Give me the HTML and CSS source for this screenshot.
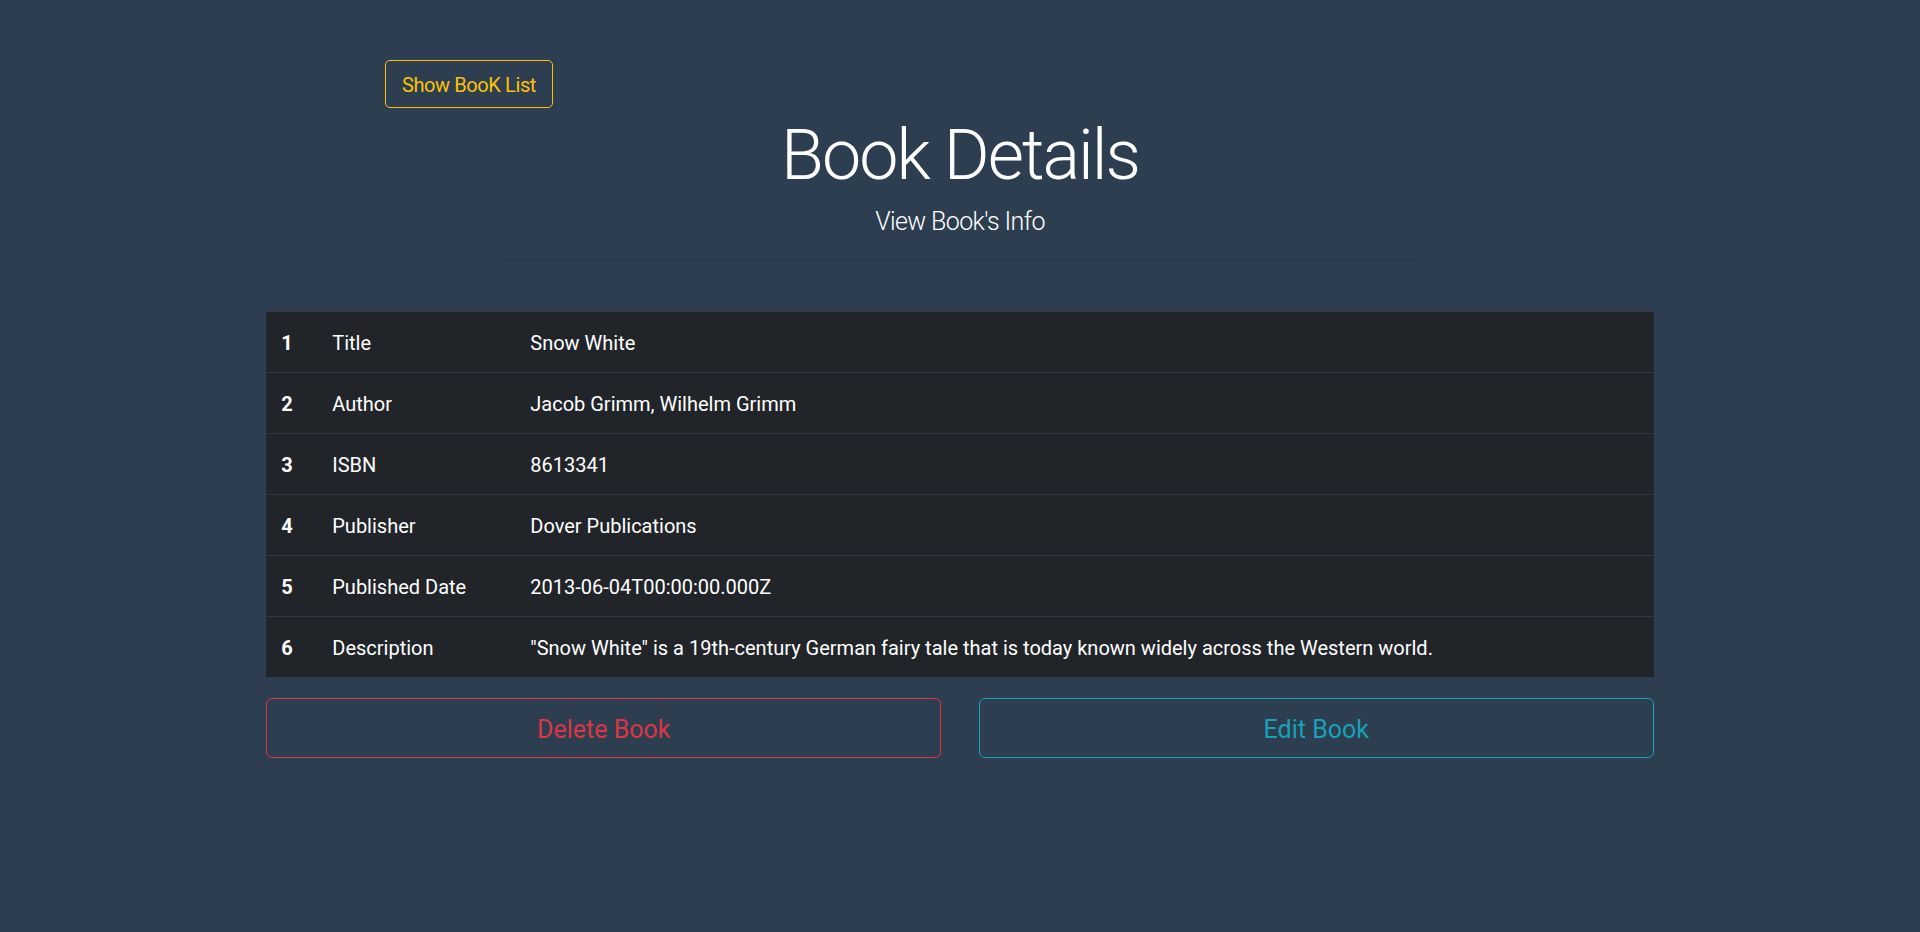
FILE: index.html
```html
<!DOCTYPE html>
<html lang="en">
<head>
<meta charset="utf-8">
<title>Book Details</title>
<link rel="stylesheet" href="styles.css">
</head>
<body>
<div class="show-book-details">
  <div class="container">
    <div class="top-bar">
      <a href="#" class="btn btn-outline-warning">Show BooK List</a>
    </div>
    <div class="header">
      <h1 class="display-title">Book Details</h1>
      <p class="lead">View Book's Info</p>
      <hr class="divider">
    </div>
    <table class="details-table">
      <colgroup>
        <col class="col-num">
        <col class="col-label">
        <col>
      </colgroup>
      <tbody>
        <tr><th>1</th><td>Title</td><td>Snow White</td></tr>
        <tr><th>2</th><td>Author</td><td>Jacob Grimm, Wilhelm Grimm</td></tr>
        <tr><th>3</th><td>ISBN</td><td>8613341</td></tr>
        <tr><th>4</th><td>Publisher</td><td>Dover Publications</td></tr>
        <tr><th>5</th><td>Published Date</td><td>2013-06-04T00:00:00.000Z</td></tr>
        <tr><th>6</th><td>Description</td><td>"Snow White" is a 19th-century German fairy tale that is today known widely across the Western world.</td></tr>
      </tbody>
    </table>
    <div class="actions">
      <button type="button" class="btn-lg btn-outline-danger">Delete Book</button>
      <a href="#" class="btn-lg btn-outline-info">Edit Book</a>
    </div>
  </div>
</div>
</body>
</html>
```
FILE: styles.css
```css
* { box-sizing: border-box; }

html, body {
  margin: 0;
  padding: 0;
}

body {
  font-family: Roboto, "Liberation Sans", sans-serif;
  font-size: 20px;
  line-height: 30px;
  color: #fff;
  background: #2c3e50;
}

.show-book-details {
  min-height: 100vh;
  background: #2c3e50;
}

.container {
  max-width: 1425px;
  margin: 0 auto;
  padding: 0 18.75px;
}

.top-bar {
  width: calc((100% + 37.5px) * 10 / 12);
  margin: 0 auto;
  padding: 60px 18.75px 0;
  display: flex;
}

.btn {
  display: inline-block;
  padding: 9px 16px 7px;
  font-size: 20px;
  line-height: 30px;
  letter-spacing: -0.4px;
  border: 1px solid transparent;
  border-radius: 5px;
  text-decoration: none;
}

.btn-outline-warning {
  color: #ffc107;
  border-color: #ffc107;
}

.header {
  width: calc((100% + 37.5px) * 8 / 12);
  margin: 0 auto;
  padding: 0 18.75px;
  text-align: center;
}

.display-title {
  margin: 0 0 5px;
  padding-top: 5px;
  font-size: 70px;
  line-height: 84px;
  font-weight: 300;
  letter-spacing: -2px;
  color: #fff;
}

.lead {
  margin: 0 0 19px;
  padding-top: 1px;
  font-size: 25px;
  line-height: 37.5px;
  font-weight: 300;
  letter-spacing: -0.6px;
}

.divider {
  margin: 0 0 50px;
  border: 0;
  border-top: 1px solid rgba(0, 0, 0, 0.1);
  height: 0;
}

.details-table {
  width: 100%;
  border-collapse: collapse;
  table-layout: fixed;
  background: #212529;
  color: #fff;
  margin-bottom: 21px;
}

.col-num { width: 51px; }
.col-label { width: 198px; }

.details-table th,
.details-table td {
  padding: 16px 15px 14px;
  line-height: 30px;
  text-align: left;
  vertical-align: top;
  border-top: 1px solid #32383e;
}

.details-table th {
  font-weight: 700;
}

.actions {
  display: grid;
  grid-template-columns: 1fr 1fr;
  column-gap: 37.5px;
}

.btn-lg {
  display: block;
  width: 100%;
  padding: 12px 20px 8px;
  font-family: Roboto, "Liberation Sans", sans-serif;
  font-size: 25px;
  line-height: 38px;
  text-align: center;
  background: transparent;
  border: 1px solid transparent;
  border-radius: 6px;
  text-decoration: none;
  cursor: pointer;
}

.btn-outline-danger {
  color: #dc3545;
  border-color: #dc3545;
}

.btn-outline-info {
  color: #17a2b8;
  border-color: #17a2b8;
}
```
